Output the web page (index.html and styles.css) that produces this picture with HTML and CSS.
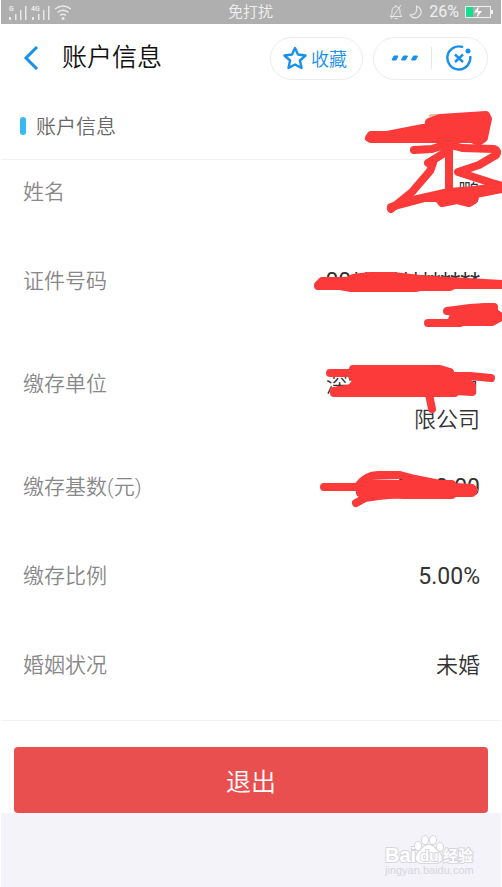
FILE: index.html
```html
<!DOCTYPE html>
<html lang="zh-CN">
<head>
<meta charset="utf-8">
<meta name="viewport" content="width=device-width, initial-scale=1">
<title>账户信息</title>
<link rel="stylesheet" href="styles.css">
</head>
<body>
<div class="status">
  <div class="status-side">
    <svg width="64" height="18" viewBox="0 0 64 18" aria-hidden="true">
      <g fill="#e8e8e8">
        <path d="M1 14h2v3h-2zM7 11h1.500v6h-1.500zM12 7h1.500v10h-1.500zM17 3h1.500v14h-1.500z"/>
        <path d="M24 14h2v3h-2zM30 11h1.500v6h-1.500zM35 7h1.500v10h-1.500zM40 3h1.500v14h-1.500z"/>
        <circle cx="55" cy="15.500" r="1.500"/>
      </g>
      <g fill="none" stroke="#e8e8e8" stroke-width="1.400">
        <path d="M47 6q8-6 16 0M49.500 9.500q5.500-4.500 11 0M52 12.500q3-2.500 6 0"/>
      </g>
      <text class="signal" x="1" y="8">G</text>
      <text class="signal" x="23" y="8">4G</text>
    </svg>
  </div>
  <span>免打扰</span>
  <div class="status-side status-right">
    <svg width="14" height="16" viewBox="0 0 14 16" fill="none" stroke="#e8e8e8" aria-hidden="true">
      <path d="M1 12.500h12l-2-3V6Q10.500 3 7 2.500 3.500 3 3 6v3.500zM7 2.500V1M5.500 14.500h3M2 15 12 1"/>
    </svg>
    <svg width="14" height="16" viewBox="0 0 14 16" fill="none" stroke="#e8e8e8" stroke-width="1.200" aria-hidden="true">
      <path d="M7.500 2A6 6 0 1 1 1 11Q9 11 7.500 2z"/>
    </svg>
    <span>26%</span>
    <svg width="28" height="14" viewBox="0 0 28 14" aria-hidden="true">
      <path d="M.5 1.500h25v11H.5z" fill="none" stroke="#f0f0f0"/>
      <path d="M26 5h2v4h-2z" fill="#f0f0f0"/>
      <path d="M1 2h7v10H1z" fill="#14df91"/>
      <path d="M14 1 9 7.500h4L11.500 13 17 6h-4z" fill="#fff"/>
    </svg>
  </div>
</div>

<header class="header">
  <button class="back" type="button" aria-label="返回">
    <svg width="16" height="24" viewBox="0 0 16 24" fill="none" stroke="#1890ee" stroke-width="3"><path d="M14 1 3 12l11 11"/></svg>
  </button>
  <h1>账户信息</h1>
  <button class="pill favorite" type="button">
    <svg width="24" height="24" viewBox="0 0 24 24" fill="none" stroke="#1890ee" stroke-width="2.400" stroke-linejoin="round" aria-hidden="true"><path d="m12 2 3 6.500 7.500 1-5.500 5 1.500 7.500-6.500-3.500L5.500 22 7 14.500l-5.500-5 7.500-1z"/></svg>
    收藏
  </button>
  <div class="pill tools">
    <button type="button" aria-label="更多">
      <svg width="28" height="6" viewBox="0 0 28 6" fill="#1890ee"><path d="M3 1h4L5 5H1zM12.500 1h4l-2 4h-4zM22.500 1h4l-2 4h-4z" stroke="#1890ee" stroke-linejoin="round"/></svg>
    </button>
    <button class="close" type="button" aria-label="关闭">
      <svg width="28" height="28" viewBox="0 0 28 28" fill="none" stroke="#1890ee" stroke-width="2.400"><path d="M18 3.200A11.500 11.500 0 1 0 25.200 12M10 10.500l8 7.500M18 10.500 10 18"/><circle cx="23" cy="7" r="2.500" fill="#1890ee" stroke="none"/></svg>
    </button>
  </div>
</header>

<main>
  <h2>账户信息</h2>
  <dl>
    <div class="row"><dt>姓名</dt><dd>鹏</dd></div>
    <div class="row"><dt>证件号码</dt><dd class="number">00*************<br>*</dd></div>
    <div class="row"><dt>缴存单位</dt><dd>深圳市某某某有限公司</dd></div>
    <div class="row"><dt>缴存基数(元)</dt><dd class="number">0000.00</dd></div>
    <div class="row"><dt>缴存比例</dt><dd class="number">5.00%</dd></div>
    <div class="row"><dt>婚姻状况</dt><dd>未婚</dd></div>
  </dl>
  <svg class="marker" width="200" height="420" viewBox="302 100 200 420" aria-hidden="true">
    <path d="M430 117v-2h16" fill="none" stroke="#d98a3d"/>
    <g fill="#fd3a3a" stroke="#fd3a3a" stroke-width="8" stroke-linejoin="round">
      <path d="M369 138 371 135 387 135 428 127 429 122 440 118 486 115 488 119 486 128 484 138 480 141 476 141 472 139 371 139z"/>
      <path d="M391 207 413 200 449 192 475 190 502 186V189L476 194 474 200 469 203 457 200 442 203 438 198 425 198z"/>
      <path d="M318 285 322 281 347 281 353 278 370 276 393 276 420 279 450 281 502 284V285L454 285 450 287 420 287 415 288 351 288 340 286 318 286z"/>
      <path d="M447 311 470 308 485 307 494 307 494 312 501 317 492 322 451 322 454 315 475 314 490 314z"/>
      <path d="M353 369 440 369 450 372 450 376 445 380 470 384 472 386 472 392 456 391 455 393 334 393 334 391 351 388 356 382 356 378 352 376z"/>
      <path d="M359 486 364 483 400 484 452 484 454 487 472 488 474 490 472 493 455 493 452 495 405 495 360 493z"/>
    </g>
    <g fill="none" stroke="#fd3a3a" stroke-width="8" stroke-linecap="round" stroke-linejoin="round">
      <path d="M414 150 432 149 447 144 462 148 494 149Q499 151 496 155L479 165 458 172 492 183 502 186M449 146V192M428 163 433 160 449 150M433 163 430 171 412 192 391 209"/>
      <path d="M428 323H460"/>
      <path d="M330 373 353 373M449 376 470 376 491 378M429 394 432 409"/>
      <path d="M324 487H360M358 486Q366 475 378 475L400 475 415 479 440 484M356 503 365 498 378 496 400 494"/>
    </g>
  </svg>
  <div class="action"><button class="exit" type="button">退出</button></div>
</main>

<footer>
  <svg width="94" height="48" viewBox="0 0 94 48" role="img" aria-label="Baidu 经验">
    <g fill="#fff" stroke="#d6d6dc" stroke-width="2" paint-order="stroke">
      <text class="wm-brand" x="2" y="29">Bai</text>
      <ellipse cx="35" cy="13" rx="3" ry="4"/><ellipse cx="42" cy="7" rx="3" ry="4"/><ellipse cx="50" cy="7" rx="3" ry="4"/><ellipse cx="57" cy="14" rx="3" ry="4"/>
      <path d="M46 12q4 0 7 5 6 4 6 8 0 5-7 5l-12 0q-7 0-7-5 0-4 5-8 4-5 8-5z"/>
      <text class="wm-du" x="37" y="28">du</text>
      <text class="wm-cn" x="60" y="28">经验</text>
    </g>
    <text class="wm-url" x="2" y="41">jingyan.baidu.com</text>
  </svg>
</footer>
</body>
</html>
```
FILE: styles.css
```css
* { box-sizing: border-box; }

body {
  margin: 0;
  padding: 0 1px;
  min-height: 100vh;
  display: flex;
  flex-direction: column;
  background: #fff;
  color: #333;
  font-family: Roboto, "Noto Sans CJK SC", sans-serif;
  font-weight: 350;
}

button {
  margin: 0;
  padding: 0;
  border: 0;
  background: none;
  font: inherit;
  color: inherit;
}

svg { display: block; flex: none; }

.status {
  height: 24px;
  padding: 0 8px 0 7px;
  display: flex;
  align-items: center;
  background: #afafaf;
  color: #f0f0f0;
  font-size: 15px;
  line-height: 20px;
}

.status-side { flex: 1; display: flex; align-items: center; }
.status-right { justify-content: flex-end; gap: 6px; font-size: 16px; font-weight: 400; }
.signal { font: 700 7px Roboto, sans-serif; fill: #e8e8e8; }

.header {
  height: 68px;
  padding: 0 13px 0 22px;
  display: flex;
  align-items: center;
}

.back { margin-right: 23px; }

h1 {
  margin: 0 auto 0 0;
  color: #111;
  font-size: 25px;
  font-weight: 350;
  line-height: 36px;
}

.pill {
  height: 43px;
  display: flex;
  align-items: center;
  border: 1px solid #ececec;
  border-radius: 22px;
}

.favorite {
  padding: 0 15px 0 12px;
  gap: 4px;
  color: #1890ee;
  font-size: 18px;
}

.tools { margin-left: 10px; padding: 0 14px 0 17px; }
.close { margin-left: 12px; padding: 0 0 0 14px; }
.tools .close { background: linear-gradient(#e6e6e6, #e6e6e6) left center / 1px 22px no-repeat; }

main { position: relative; }

h2 {
  margin: 0;
  height: 68px;
  padding: 0 19px;
  display: flex;
  align-items: center;
  gap: 10px;
  border-bottom: 1px solid #f0f0f0;
  color: #666;
  font-size: 20px;
  font-weight: 350;
}

h2::before {
  content: "";
  width: 6px;
  height: 18px;
  border-radius: 3px;
  background: #35baf3;
}

dl {
  margin: 0;
  padding: 15px 21px 0 22px;
  border-bottom: 1px solid #f2f2f2;
}

.row {
  min-height: 89px;
  padding-bottom: 33px;
  display: flex;
  justify-content: space-between;
  line-height: 35px;
}

.row:last-child { min-height: 72px; }

dt { color: #888; font-size: 21px; }

dd {
  margin: 0;
  max-width: 160px;
  color: #333;
  font-size: 22px;
  text-align: right;
}

.number { font-size: 23px; font-weight: 400; }

.marker {
  position: absolute;
  top: 8px;
  right: -1px;
}

.action { padding: 26px 13px 0; }

.exit {
  display: block;
  width: 100%;
  height: 66px;
  border-radius: 4px;
  background: #e94f4f;
  color: #fff;
  font-size: 25px;
}

footer {
  flex: 1;
  min-height: 74px;
  padding: 20px 24px 0;
  display: flex;
  justify-content: flex-end;
  background: #f3f3f9;
}

.wm-brand { font: 700 20px "Liberation Sans", sans-serif; }
.wm-du { font: 700 15px "Liberation Sans", sans-serif; }
.wm-cn { font: 700 15px "Noto Sans CJK SC", sans-serif; }
.wm-url { font: 400 11px "Liberation Sans", sans-serif; fill: #d6d6dc; }
```
